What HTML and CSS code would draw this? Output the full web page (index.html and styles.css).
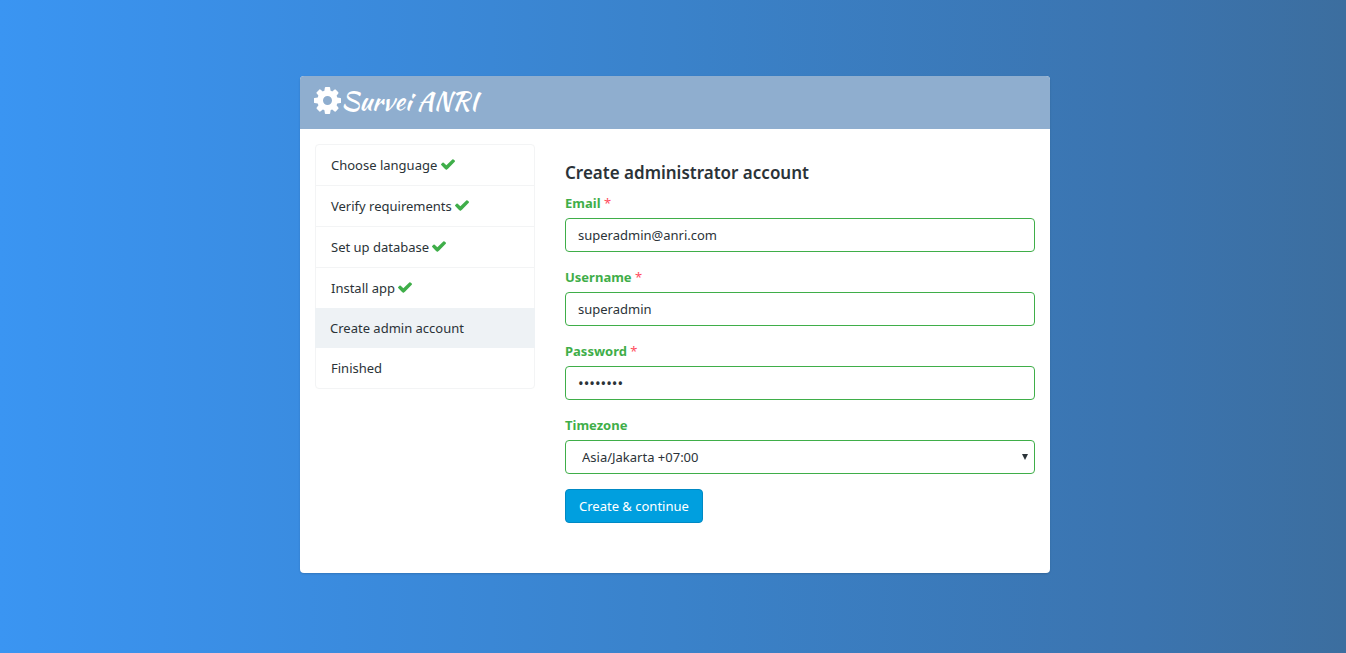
FILE: index.html
```html
<!DOCTYPE html>
<html lang="en">
<head>
<meta charset="utf-8">
<meta name="viewport" content="width=device-width, initial-scale=1">
<title>Survei ANRI</title>
<link rel="stylesheet" href="styles.css">
</head>
<body>
<svg class="sprite" aria-hidden="true">
  <symbol id="check" viewBox="121 344 1550 1280"><path d="M1671 566q0 40-28 68l-724 724-136 136q-28 28-68 28t-68-28l-136-136-362-362q-28-28-28-68t28-68l136-136q28-28 68-28t68 28l294 295 656-657q28-28 68-28t68 28l136 136q28 28 28 68z"/></symbol>
</svg>
<main class="card">
  <header class="card-header">
    <a class="brand" href="#">
      <svg class="brand-icon" viewBox="128 128 1536 1536" aria-hidden="true"><path d="M1152 896q0-106-75-181t-181-75-181 75-75 181 75 181 181 75 181-75 75-181zm512-109v222q0 12-8 23t-20 13l-185 28q-19 54-39 91 35 50 107 138 10 12 10 25t-9 23q-27 37-99 108t-94 71q-12 0-26-9l-138-108q-44 23-91 38-16 136-29 186-7 28-36 28h-222q-14 0-24.500-8.500t-11.500-21.500l-28-184q-49-16-90-37l-141 107q-10 9-25 9-14 0-25-11-126-114-165-168-7-10-7-23 0-12 8-23 15-21 51-66.500t54-70.500q-27-50-41-99l-183-27q-13-2-21-12.500t-8-23.500v-222q0-12 8-23t19-13l186-28q14-46 39-92-40-57-107-138-10-12-10-24 0-10 9-23 26-36 98.500-107.500t94.500-71.500q13 0 26 10l138 107q44-23 91-38 16-136 29-186 7-28 36-28h222q14 0 24.500 8.500t11.500 21.500l28 184q49 16 90 37l142-107q9-9 24-9 13 0 25 10 129 119 165 170 7 8 7 22 0 12-8 23-15 21-51 66.500t-54 70.500q26 50 41 98l183 28q13 2 21 12.500t8 23.500z"/></svg>
      <span>Survei ANRI</span>
    </a>
  </header>
  <div class="card-body">
    <ol class="steps">
      <li class="step">Choose language <svg class="check"><use href="#check"/></svg></li>
      <li class="step">Verify requirements <svg class="check"><use href="#check"/></svg></li>
      <li class="step">Set up database <svg class="check"><use href="#check"/></svg></li>
      <li class="step">Install app <svg class="check"><use href="#check"/></svg></li>
      <li class="step step-active" aria-current="step">Create admin account</li>
      <li class="step">Finished</li>
    </ol>
    <form class="account">
      <h1 class="title">Create administrator account</h1>
      <div class="field">
        <label class="label" for="email">Email <span class="required">*</span></label>
        <input class="control" id="email" type="email" value="superadmin@anri.com" required>
      </div>
      <div class="field">
        <label class="label" for="username">Username <span class="required">*</span></label>
        <input class="control" id="username" type="text" value="superadmin" required>
      </div>
      <div class="field">
        <label class="label" for="password">Password <span class="required">*</span></label>
        <input class="control control-password" id="password" type="password" value="password" required>
      </div>
      <div class="field">
        <label class="label" for="timezone">Timezone</label>
        <div class="select">
          <select class="control control-select" id="timezone"><option>Asia/Jakarta +07:00</option></select>
          <svg class="arrow" viewBox="0 0 6 6" aria-hidden="true"><path d="M0 0h6L3 6z"/></svg>
        </div>
      </div>
      <button class="submit" type="button">Create &amp; continue</button>
    </form>
  </div>
</main>
</body>
</html>
```

FILE: styles.css
```css
* {
  box-sizing: border-box;
}

body {
  margin: 0;
  min-height: 100vh;
  padding: 76px 16px 80px 20px;
  background: linear-gradient(to right, #3a95f2 0%, #3a90e9 12%, #3a82ca 50%, #3b74af 85%, #3c6e9f 100%);
  color: #2b3338;
  font: 13px/20px "Noto Sans", "Open Sans", sans-serif;
}

.sprite {
  display: none;
}

.card {
  max-width: 750px;
  margin: 0 auto;
  border-radius: 4px;
  background: #fff;
  box-shadow: 0 1px 2px rgba(0, 0, 0, 0.15);
}

.card-header {
  padding: 7px 14px 9px;
  border-radius: 4px 4px 0 0;
  background: #8faecf;
}

.brand {
  display: inline-flex;
  align-items: center;
  color: #fff;
  font: 26px/37px "Kaushan Script", Lato, sans-serif;
  text-decoration: none;
  vertical-align: top;
}

.brand-icon {
  width: 27px;
  height: 27px;
  margin-bottom: 3px;
  fill: currentColor;
}

.card-body {
  display: grid;
  grid-template-columns: 220px 1fr;
  gap: 30px;
  padding: 15px 15px 50px;
}

.steps {
  align-self: start;
  margin: 0;
  padding: 0 0 1px;
  list-style: none;
}

.step {
  margin-bottom: -1px;
  padding: 10px 15px;
  border: 1px solid #f3f4f5;
}

.step:first-child {
  border-radius: 4px 4px 0 0;
}

.step:last-child {
  border-radius: 0 0 4px 4px;
}

.step-active {
  position: relative;
  border: 0;
  background: #eef2f5;
}

.check {
  width: 14px;
  height: 12px;
  fill: #3fae49;
  vertical-align: -1px;
}

.account {
  padding-top: 19px;
}

.title {
  margin: 0 0 10px;
  font-size: 17px;
  font-weight: 600;
  line-height: 20px;
}

.field {
  margin-bottom: 15px;
}

.label {
  display: block;
  margin-bottom: 5px;
  color: #3fae49;
  font-weight: 700;
}

.required {
  color: #ff4c5e;
  font-weight: 400;
}

.control {
  display: block;
  width: 100%;
  height: 34px;
  padding: 6px 12px;
  border: 1px solid #3fae49;
  border-radius: 4px;
  background: #fff;
  color: inherit;
  font: inherit;
}

.control-password {
  font-size: 15px;
}

.select {
  position: relative;
}

.control-select {
  padding: 6px 16px;
  appearance: none;
}

.arrow {
  position: absolute;
  top: 14px;
  right: 7px;
  width: 6px;
  height: 6px;
  fill: #2b3338;
  pointer-events: none;
}

.submit {
  height: 34px;
  padding: 6px 13px;
  border: 1px solid #0089c4;
  border-radius: 4px;
  background: #009fdf;
  color: #fff;
  font: inherit;
}
```
